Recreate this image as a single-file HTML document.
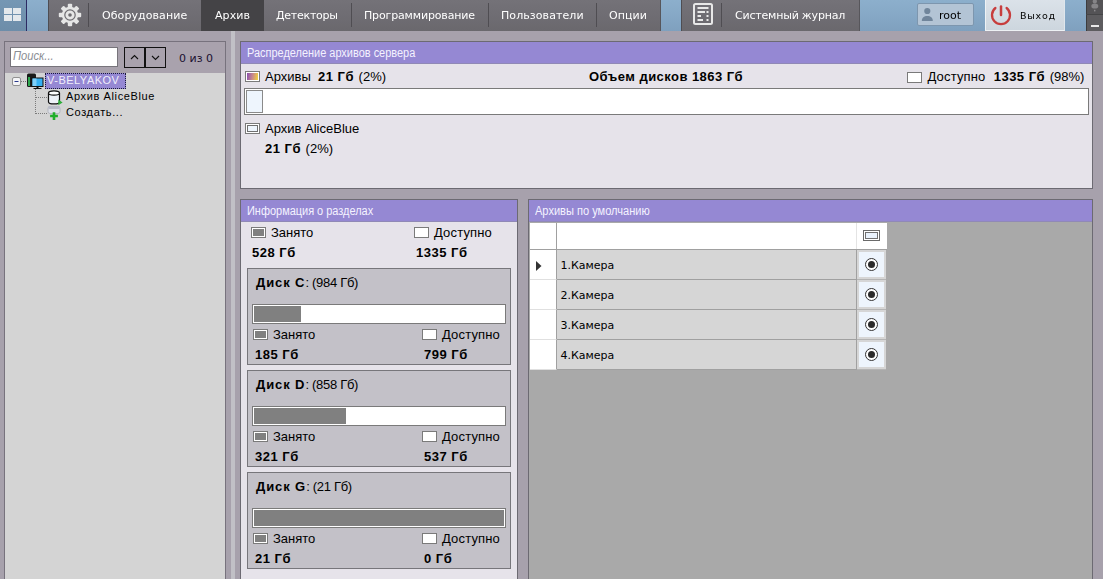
<!DOCTYPE html>
<html lang="ru">
<head>
<meta charset="utf-8">
<title>Архив</title>
<style>
*{box-sizing:border-box;margin:0;padding:0}
html,body{width:1103px;height:579px;overflow:hidden}
body{background:#a7a1ac;font-family:"Liberation Sans",sans-serif;font-size:13px;color:#000;position:relative}
.a{position:absolute}
.dv{font-family:"DejaVu Sans","Liberation Sans",sans-serif;font-size:11px;white-space:nowrap}
#top .dv{will-change:transform}
.t{white-space:nowrap;line-height:16px}
b{font-weight:bold;letter-spacing:.5px;margin-right:1px}
b.dn{letter-spacing:.9px;margin-right:0}
.ds{letter-spacing:-.3px}
/* top bar */
#top{left:0;top:0;width:1103px;height:31px;background:linear-gradient(#8cafcc,#86a8c6 50%,#7fa0be)}
.dk{background:linear-gradient(#747278,#6f6d73 50%,#6a686d);top:0;height:31px;box-shadow:inset 1px 0 #4e4d52,inset -1px 0 #57565b}
.mi{color:#fff;top:9px;line-height:14px;letter-spacing:.08px}
.sep{width:1px;top:3px;height:24px;background:#4f4d52}
/* panels */
.hd{background:#9588d3;color:#f4f2ff;font-size:12px;line-height:22px;height:22px;border-bottom:1px solid #9089b6;padding-left:6px;white-space:nowrap}
.hd span{display:inline-block;transform:scaleX(.913);transform-origin:0 50%}
.pn{background:#e6e3ea;border:1px solid #6c6a72}
.sw{width:15px;height:11px;border:1px solid #7a7a7a;background:#fff}
.sw.g{background:#808080;box-shadow:inset 0 0 0 1px #fff}
.disk{left:6px;width:264px;height:97px;background:#c3c1c8;border:1px solid #77767b}
.bar{left:4px;top:35px;width:254px;height:20px;background:#fff;border:1px solid #7a7a7a}
.bar i{position:absolute;left:1px;top:1px;height:16px;background:#808080;display:block}
.row{left:1px;width:357px;height:30px}
.row .c0{left:0;top:0;width:27px;height:30px;background:#fff;border-bottom:1px solid #e0e0e0;border-right:1px solid #a0a0a0}
.row .c1{left:27px;top:0;width:300px;height:30px;background:#d6d6d6;border-bottom:1px solid #a0a0a0;border-right:1px solid #a0a0a0;padding-left:3.5px;line-height:31px}
.row .c2{left:327px;top:0;width:29px;height:30px;background:#d6d6d6;border-bottom:1px solid #b4b4b4}
.row .c2 .cb{position:absolute;left:2px;top:2px;width:25px;height:25px;background:#eef5fd;display:block}
.row .c2 .rd{position:absolute;left:8px;top:8px;width:13px;height:13px;border:1px solid #333;border-radius:50%;background:#fff;display:block}
.row .c2 .rd::after{content:"";position:absolute;left:2px;top:2px;width:7px;height:7px;border-radius:50%;background:#2b2b2b}
</style>
</head>
<body>
<!-- TOP BAR -->
<div id="top" class="a">
  <div class="a" style="left:0;top:0;width:26px;height:31px;background:linear-gradient(#7597b4,#6d8da9)"></div>
  <svg class="a" style="left:4px;top:8px" width="17" height="13" viewBox="0 0 17 13"><g fill="#e3e8ec"><rect x="0" y="0" width="8" height="6"/><rect x="9" y="0" width="8" height="6"/><rect x="0" y="7" width="8" height="6"/><rect x="9" y="7" width="8" height="6"/></g></svg>
  <div class="a" style="left:26px;top:0;width:1px;height:31px;background:#2c2b63"></div>
  <div class="a dk" style="left:48px;width:613px"></div>
  <div class="a" style="left:201px;top:0;width:63px;height:31px;background:#444346"></div>
  <svg class="a" style="left:58px;top:3px" width="24" height="24" viewBox="-12 -12 24 24">
    <g fill="#e6e6e6">
      <circle r="8.2"/>
      <g id="th"><rect x="-2.2" y="-11.2" width="4.4" height="22.4" rx="1"/></g>
      <rect x="-2.2" y="-11.2" width="4.4" height="22.4" rx="1" transform="rotate(45)"/>
      <rect x="-2.2" y="-11.2" width="4.4" height="22.4" rx="1" transform="rotate(90)"/>
      <rect x="-2.2" y="-11.2" width="4.4" height="22.4" rx="1" transform="rotate(135)"/>
    </g>
    <circle r="5.2" fill="none" stroke="#6d6b70" stroke-width="1.2"/>
    <circle r="1.8" fill="#6d6b70"/>
  </svg>
  <div class="a sep" style="left:88px"></div>
  <div class="a dv mi" style="left:102px">Оборудование</div>
  <div class="a dv mi" style="left:215px">Архив</div>
  <div class="a dv mi" style="left:276px;letter-spacing:-.25px">Детекторы</div>
  <div class="a sep" style="left:351px"></div>
  <div class="a dv mi" style="left:364px;letter-spacing:-.15px">Программирование</div>
  <div class="a sep" style="left:488px"></div>
  <div class="a dv mi" style="left:501px">Пользователи</div>
  <div class="a sep" style="left:596px"></div>
  <div class="a dv mi" style="left:609px">Опции</div>
  <div class="a dk" style="left:681px;width:179px"></div>
  <svg class="a" style="left:692px;top:2px" width="22" height="24" viewBox="0 0 22 24">
    <rect x="2" y="2" width="18" height="20" rx="1.5" fill="none" stroke="#e8e8e8" stroke-width="2"/>
    <g fill="#e8e8e8"><rect x="5.5" y="5" width="11" height="2"/><rect x="5.5" y="9" width="7.5" height="2"/><rect x="5.5" y="13" width="3.5" height="2"/><rect x="5.5" y="17" width="5.5" height="2"/><rect x="14.5" y="9" width="2" height="2"/><rect x="14.5" y="13" width="2" height="2"/><rect x="14.5" y="17" width="2" height="2"/></g>
  </svg>
  <div class="a sep" style="left:721px"></div>
  <div class="a dv mi" style="left:734.5px;letter-spacing:-.2px">Системный журнал</div>
  <div class="a" style="left:917px;top:3px;width:57px;height:23px;background:#b3c4d5;border:1px solid #7d96ae;border-radius:2px"></div>
  <svg class="a" style="left:921px;top:7px" width="13" height="15" viewBox="0 0 13 15"><g fill="#70859b"><circle cx="6.3" cy="4" r="3.1"/><path d="M0.8 14 C0.8 10.5 3 9 6.3 9 C9.6 9 11.8 10.5 11.8 14 Z"/></g></svg>
  <div class="a dv" style="left:939px;top:9px;line-height:14px;color:#000">root</div>
  <div class="a" style="left:985px;top:0;width:80px;height:31px;background:linear-gradient(#dbe2e9,#cdd6de);border-left:1px solid #eef2f5;border-bottom:1px solid #eef2f5;border-right:1px solid #dfe6ec"></div>
  <svg class="a" style="left:989px;top:3px" width="24" height="24" viewBox="-12 -12 24 24"><path d="M-5.6 -7 A9 9 0 1 0 5.6 -7" fill="none" stroke="#c73d3d" stroke-width="2.3" stroke-linecap="round"/><line x1="0" y1="-8.6" x2="0" y2="0" stroke="#c73d3d" stroke-width="2.5" stroke-linecap="round"/></svg>
  <div class="a dv" style="left:1020px;top:9px;line-height:14px;color:#000;font-size:9.5px;letter-spacing:.75px">Выход</div>
  <div class="a" style="left:1086px;top:0;width:17px;height:14px;background:#545356;border-left:1px solid #3c3c3e"></div>
  <div class="a" style="left:1086px;top:15px;width:17px;height:16px;background:#5d5c5f;border-left:1px solid #3c3c3e"></div>
  <div class="a" style="left:1086px;top:14px;width:17px;height:1px;background:#454547"></div>
  <svg class="a" style="left:1090px;top:0" width="10" height="13" viewBox="0 0 10 13"><g fill="#858487"><circle cx="4.8" cy="1.4" r="2.1"/><ellipse cx="4.8" cy="6" rx="3.5" ry="2.6"/><rect x="4.3" y="9.8" width="1" height="1.6" fill="#a5a4a7"/></g></svg>
  <div class="a" style="left:1091px;top:25px;width:8px;height:2px;background:#e8e8e8"></div>
</div>

<!-- LEFT PANEL -->
<div class="a" style="left:4px;top:41px;width:222px;height:540px;border:1px solid #77727d;background:#d4d4d4">
  <div class="a" style="left:0;top:0;width:220px;height:31px;background:#a9a2ad"></div>
</div>
<div class="a" style="left:10px;top:47px;width:108px;height:20px;background:#fff;border:1px solid #77747b"></div>
<div class="a t" style="left:13px;top:48px;font-style:italic;font-size:12px;color:#8a8d94;transform:scaleX(.93);transform-origin:0 50%">Поиск...</div>
<div class="a" style="left:124px;top:47px;width:21px;height:21px;border:1px solid #111"></div>
<div class="a" style="left:145px;top:47px;width:21px;height:21px;border:1px solid #111"></div>
<svg class="a" style="left:124px;top:47px" width="42" height="21" viewBox="0 0 42 21"><path d="M7 12 L10.5 8.5 L14 12 M28 9 L31.5 12.5 L35 9" fill="none" stroke="#111" stroke-width="1.1"/></svg>
<div class="a dv" style="left:179px;top:52px;line-height:14px;color:#1a1030">0 из 0</div>

<!-- tree -->
<svg class="a" style="left:10px;top:72px" width="60" height="50" viewBox="0 0 60 50">
  <g stroke="#7a7a7a" stroke-width="1" stroke-dasharray="1 1" fill="none"><path d="M11 9.5 H17"/><path d="M25.5 17 V42"/><path d="M26 25.5 H37"/><path d="M26 41.5 H37"/></g>
  <rect x="2.5" y="5.5" width="8" height="8" rx="1.5" fill="#f4f4f6" stroke="#919191"/>
  <path d="M4.5 9.5 H8.5" stroke="#2b3a8c" stroke-width="1"/>
  <!-- computer -->
  <rect x="17" y="1.5" width="9" height="13.5" rx="1.5" fill="#1a1a1a"/>
  <rect x="18" y="5" width="2" height="9" fill="#2fa84f"/>
  <rect x="21.5" y="5.5" width="12" height="9.5" fill="#111"/>
  <rect x="22.5" y="6.5" width="10" height="7.5" fill="#35b0f2"/>
  <rect x="22.5" y="6.5" width="4" height="7.5" fill="#7fd0fa"/>
  <rect x="26.5" y="15" width="2" height="1.2" fill="#111"/>
  <rect x="23.5" y="16" width="8" height="1" fill="#111"/>
  <!-- archive -->
  <path d="M38.5 21 V30 C38.5 32.6 49.5 32.6 49.5 30 V21" fill="#eef2f8" stroke="#111" stroke-width="1.2"/>
  <ellipse cx="44" cy="21" rx="5.5" ry="2.2" fill="#fff" stroke="#111" stroke-width="1.2"/>
  <path d="M48.3 27.6 L52.6 30.4 L48.3 33.2 Z" fill="#2fae3a"/>
  <!-- create -->
  <rect x="38" y="34.5" width="12" height="7" rx="2" fill="#dcdfe6" stroke="#b4b7c0" stroke-width="1"/>
  <rect x="38" y="34" width="12" height="3" rx="1.5" fill="#b9bcc8"/>
  <path d="M44 40.2 V47.9 M40.1 44 H47.9" stroke="#1fae2a" stroke-width="2.6"/>
</svg>
<div class="a" style="left:45px;top:73px;width:81px;height:16px;background:#9588d3;border:1px dotted #1a1a3a"></div>
<div class="a t" style="left:47px;top:72px;font-size:11px;color:#f0eefc;letter-spacing:.5px">V-BELYAKOV</div>
<div class="a t" style="left:66px;top:88px;font-size:11px;letter-spacing:.62px">Архив AliceBlue</div>
<div class="a t" style="left:66px;top:104px;font-size:11px;letter-spacing:.62px">Создать...</div>

<!-- splitter -->
<div class="a" style="left:231px;top:31px;width:4px;height:548px;background:#c1c0c6"></div>

<!-- PANEL 1 -->
<div class="a pn" style="left:240px;top:41px;width:853px;height:148px">
  <div class="hd"><span>Распределение архивов сервера</span></div>
  <div class="a sw" style="left:4px;top:29px;background:linear-gradient(100deg,#8b4fb0 10%,#c98a8a 50%,#f2d23c 90%);box-shadow:inset 0 0 0 1px #fff"></div>
  <div class="a t" style="left:24px;top:27px">Архивы&nbsp; <b>21 Гб</b> (2%)</div>
  <div class="a t" style="left:348px;top:27px"><b style="letter-spacing:.45px">Объем дисков 1863 Гб</b></div>
  <div class="a sw" style="left:666px;top:30px"></div>
  <div class="a t" style="left:686.5px;top:27px"><span style="letter-spacing:.15px">Доступно</span>&nbsp; <b style="margin-left:1px">1335 Гб</b> (98%)</div>
  <div class="a" style="left:3px;top:46px;width:845px;height:27px;background:#fff;border:1px solid #7a7a7a">
    <div class="a" style="left:1px;top:1px;width:17px;height:23px;background:#eef5fd;border:1px solid #8a8a8a"></div>
  </div>
  <div class="a sw" style="left:4px;top:81px;box-shadow:inset 0 0 0 1px #fff, inset 0 0 0 2px #707070;background:#eef5fd"></div>
  <div class="a t" style="left:24px;top:79px">Архив AliceBlue</div>
  <div class="a t" style="left:24px;top:99px"><b>21 Гб</b> (2%)</div>
</div>

<!-- PANEL 2 -->
<div class="a pn" style="left:240px;top:199px;width:278px;height:390px">
  <div class="hd"><span>Информация о разделах</span></div>
  <div class="a sw g" style="left:10px;top:27px"></div>
  <div class="a t" style="left:30px;top:25px">Занято</div>
  <div class="a t" style="left:11px;top:45px"><b>528 Гб</b></div>
  <div class="a sw" style="left:173px;top:27px"></div>
  <div class="a t" style="left:193px;top:25px;letter-spacing:.15px">Доступно</div>
  <div class="a t" style="left:175px;top:45px"><b>1335 Гб</b></div>

  <div class="a disk" style="top:68px">
    <div class="a t" style="left:8px;top:6px"><b class="dn">Диск C</b><span class="ds">: (984 Гб)</span></div>
    <div class="a bar"><i style="width:47px"></i></div>
    <div class="a sw g" style="left:5px;top:60px"></div>
    <div class="a t" style="left:25px;top:58px">Занято</div>
    <div class="a t" style="left:7px;top:78px"><b>185 Гб</b></div>
    <div class="a sw" style="left:174px;top:60px"></div>
    <div class="a t" style="left:194px;top:58px;letter-spacing:.15px">Доступно</div>
    <div class="a t" style="left:176px;top:78px"><b>799 Гб</b></div>
  </div>
  <div class="a disk" style="top:170px">
    <div class="a t" style="left:8px;top:6px"><b class="dn">Диск D</b><span class="ds">: (858 Гб)</span></div>
    <div class="a bar"><i style="width:92px"></i></div>
    <div class="a sw g" style="left:5px;top:60px"></div>
    <div class="a t" style="left:25px;top:58px">Занято</div>
    <div class="a t" style="left:7px;top:78px"><b>321 Гб</b></div>
    <div class="a sw" style="left:174px;top:60px"></div>
    <div class="a t" style="left:194px;top:58px;letter-spacing:.15px">Доступно</div>
    <div class="a t" style="left:176px;top:78px"><b>537 Гб</b></div>
  </div>
  <div class="a disk" style="top:272px">
    <div class="a t" style="left:8px;top:6px"><b class="dn">Диск G</b><span class="ds">: (21 Гб)</span></div>
    <div class="a bar"><i style="width:250px"></i></div>
    <div class="a sw g" style="left:5px;top:60px"></div>
    <div class="a t" style="left:25px;top:58px">Занято</div>
    <div class="a t" style="left:7px;top:78px"><b>21 Гб</b></div>
    <div class="a sw" style="left:174px;top:60px"></div>
    <div class="a t" style="left:194px;top:58px;letter-spacing:.15px">Доступно</div>
    <div class="a t" style="left:176px;top:78px"><b>0 Гб</b></div>
  </div>
</div>

<!-- PANEL 3 -->
<div class="a pn" style="left:528px;top:199px;width:565px;height:390px;background:#a9a9a9">
  <div class="hd"><span style="transform:scaleX(.921)">Архивы по умолчанию</span></div>
  <div class="a" style="left:1px;top:23px;width:357px;height:27px;background:#fff;border-bottom:1px solid #a0a0a0"></div>
  <div class="a" style="left:27px;top:23px;width:1px;height:27px;background:#a0a0a0"></div>
  <div class="a" style="left:327px;top:23px;width:1px;height:26px;background:#e4e4e4"></div>
  <div class="a" style="left:334px;top:30px;width:17px;height:11px;border:1px solid #6a6a6a;background:#eaf2fc;box-shadow:inset 0 0 0 1px #fff, inset 0 0 0 2px #707070"></div>
  <div class="a row" style="top:50px"><div class="a c0"><svg class="a" style="left:6px;top:11px" width="6" height="10" viewBox="0 0 6 10"><path d="M0 0 L5.5 5 L0 10 Z" fill="#333"/></svg></div><div class="a c1 dv">1.Камера</div><div class="a c2"><span class="cb"></span><span class="rd"></span></div></div>
  <div class="a row" style="top:80px"><div class="a c0"></div><div class="a c1 dv">2.Камера</div><div class="a c2"><span class="cb"></span><span class="rd"></span></div></div>
  <div class="a row" style="top:110px"><div class="a c0"></div><div class="a c1 dv">3.Камера</div><div class="a c2"><span class="cb"></span><span class="rd"></span></div></div>
  <div class="a row" style="top:140px"><div class="a c0"></div><div class="a c1 dv">4.Камера</div><div class="a c2"><span class="cb"></span><span class="rd"></span></div></div>
</div>
</body>
</html>
